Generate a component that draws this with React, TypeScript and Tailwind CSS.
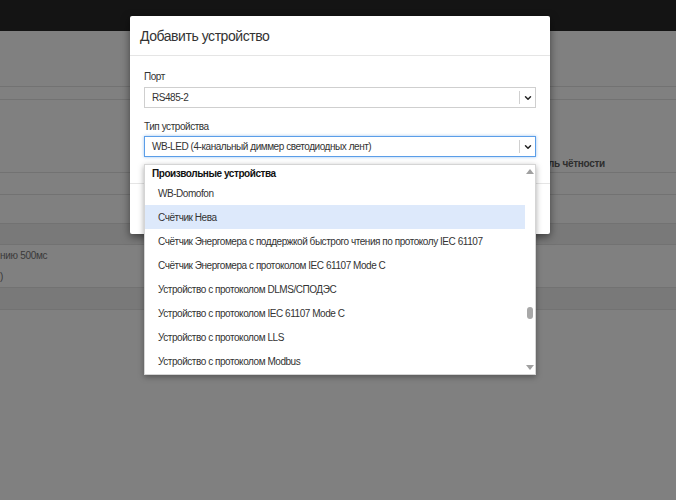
import { ChevronDown } from "lucide-react";

const items = [
  "WB-Domofon",
  "Счётчик Нева",
  "Счётчик Энергомера с поддержкой быстрого чтения по протоколу IEC 61107",
  "Счётчик Энергомера с протоколом IEC 61107 Mode C",
  "Устройство с протоколом DLMS/СПОДЭС",
  "Устройство с протоколом IEC 61107 Mode C",
  "Устройство с протоколом LLS",
  "Устройство с протоколом Modbus",
];

function Select({ value, focused }: { value: string; focused?: boolean }) {
  return (
    <div
      className={
        focused
          ? "flex h-[21px] items-center border border-[#5b9ee8] bg-white pl-[7px] pr-[2px] shadow-[0_0_3px_rgba(91,158,232,0.6)]"
          : "flex h-[21px] items-center border border-[#cfcfcf] bg-white pl-[7px] pr-[2px]"
      }
    >
      <span className="flex-1 whitespace-nowrap text-[10px] tracking-[-0.45px] text-[#333]">{value}</span>
      <span className="mr-[3px] h-[13px] w-px bg-[#d0d0d0]" />
      <ChevronDown className="h-[10px] w-[10px] text-[#222]" strokeWidth={3.5} />
    </div>
  );
}

export default function App() {
  return (
    <div className="relative h-[500px] w-[676px] overflow-hidden bg-[#808080] font-['Liberation_Sans',Arial,sans-serif]">
      {/* page behind the overlay */}
      <div className="h-[31px] bg-[#141414]" />
      <div className="h-[56px] border-b border-[#727272]" />
      <div className="h-[13px] border-b border-[#727272]" />
      <div className="h-[73px] border-b border-[#727272]" />
      <div className="h-[22px] border-b border-[#727272]" />
      <div className="h-[28px]" />
      <div className="h-[22px] border-y border-[#727272] bg-[#797979]" />
      <div className="flex h-[21px] items-center text-[10px] tracking-[-0.3px] text-[#3a3a3a]">нию 500мс</div>
      <div className="flex h-[22px] items-center border-b border-[#727272] text-[10px] text-[#3a3a3a]">
        )
      </div>
      <div className="h-[22px] border-b border-[#727272] bg-[#797979]" />
      <span className="absolute left-[548px] top-[156px] whitespace-nowrap text-[10px] font-bold tracking-[-0.3px] text-[#2e2e2e]">
        ль чётности
      </span>

      {/* modal */}
      <div className="absolute left-[130px] top-[16px] w-[420px] rounded-[2px] bg-white shadow-[0_3px_9px_rgba(0,0,0,0.5)]">
        <div className="flex h-[40px] items-center border-b border-[#e5e5e5] px-[10px]">
          <h4 className="pt-px text-[14px] tracking-[-0.45px] text-[#333]">Добавить устройство</h4>
        </div>
        <div className="px-[14px] pt-[15px]">
          <div className="mb-[4px] h-[12px] text-[10px] leading-[12px] tracking-[-0.45px] text-[#333]">Порт</div>
          <Select value="RS485-2" />
          <div className="mb-[3px] mt-[13px] h-[12px] text-[10px] leading-[12px] tracking-[-0.45px] text-[#333]">
            Тип устройства
          </div>
          <Select value="WB-LED (4-канальный диммер светодиодных лент)" focused />
        </div>
        <div className="mt-[26px] h-[51px] border-t border-[#e5e5e5]" />
      </div>

      {/* open dropdown list */}
      <div className="absolute left-[144px] top-[164px] flex h-[211px] w-[392px] border border-[#d5d5d5] bg-white shadow-[0_2px_6px_rgba(0,0,0,0.35)]">
        <div className="flex-1 overflow-hidden">
          <div className="flex h-[16px] items-center pl-[7px] text-[10px] font-bold tracking-[-0.45px] text-[#111]">
            Произвольные устройства
          </div>
          {items.map((item, i) => (
            <div
              key={item}
              className={
                i === 1
                  ? "flex h-[24px] items-center whitespace-nowrap bg-[#dde9fb] pl-[13px] text-[10px] tracking-[-0.45px] text-[#333]"
                  : "flex h-[24px] items-center whitespace-nowrap pl-[13px] text-[10px] tracking-[-0.45px] text-[#333]"
              }
            >
              {item}
            </div>
          ))}
        </div>
        <div className="relative w-[10px]">
          <svg className="absolute left-[1px] top-[4px]" width="8" height="5" viewBox="0 0 8 5">
            <path d="M0 5 L4 0 L8 5 Z" fill="#a0a0a0" />
          </svg>
          <div className="absolute left-[2px] top-[142px] h-[12px] w-[6px] rounded-full bg-[#a8a8a8]" />
          <svg className="absolute bottom-[4px] left-[1px]" width="8" height="5" viewBox="0 0 8 5">
            <path d="M0 0 L4 5 L8 0 Z" fill="#a0a0a0" />
          </svg>
        </div>
      </div>
    </div>
  );
}
